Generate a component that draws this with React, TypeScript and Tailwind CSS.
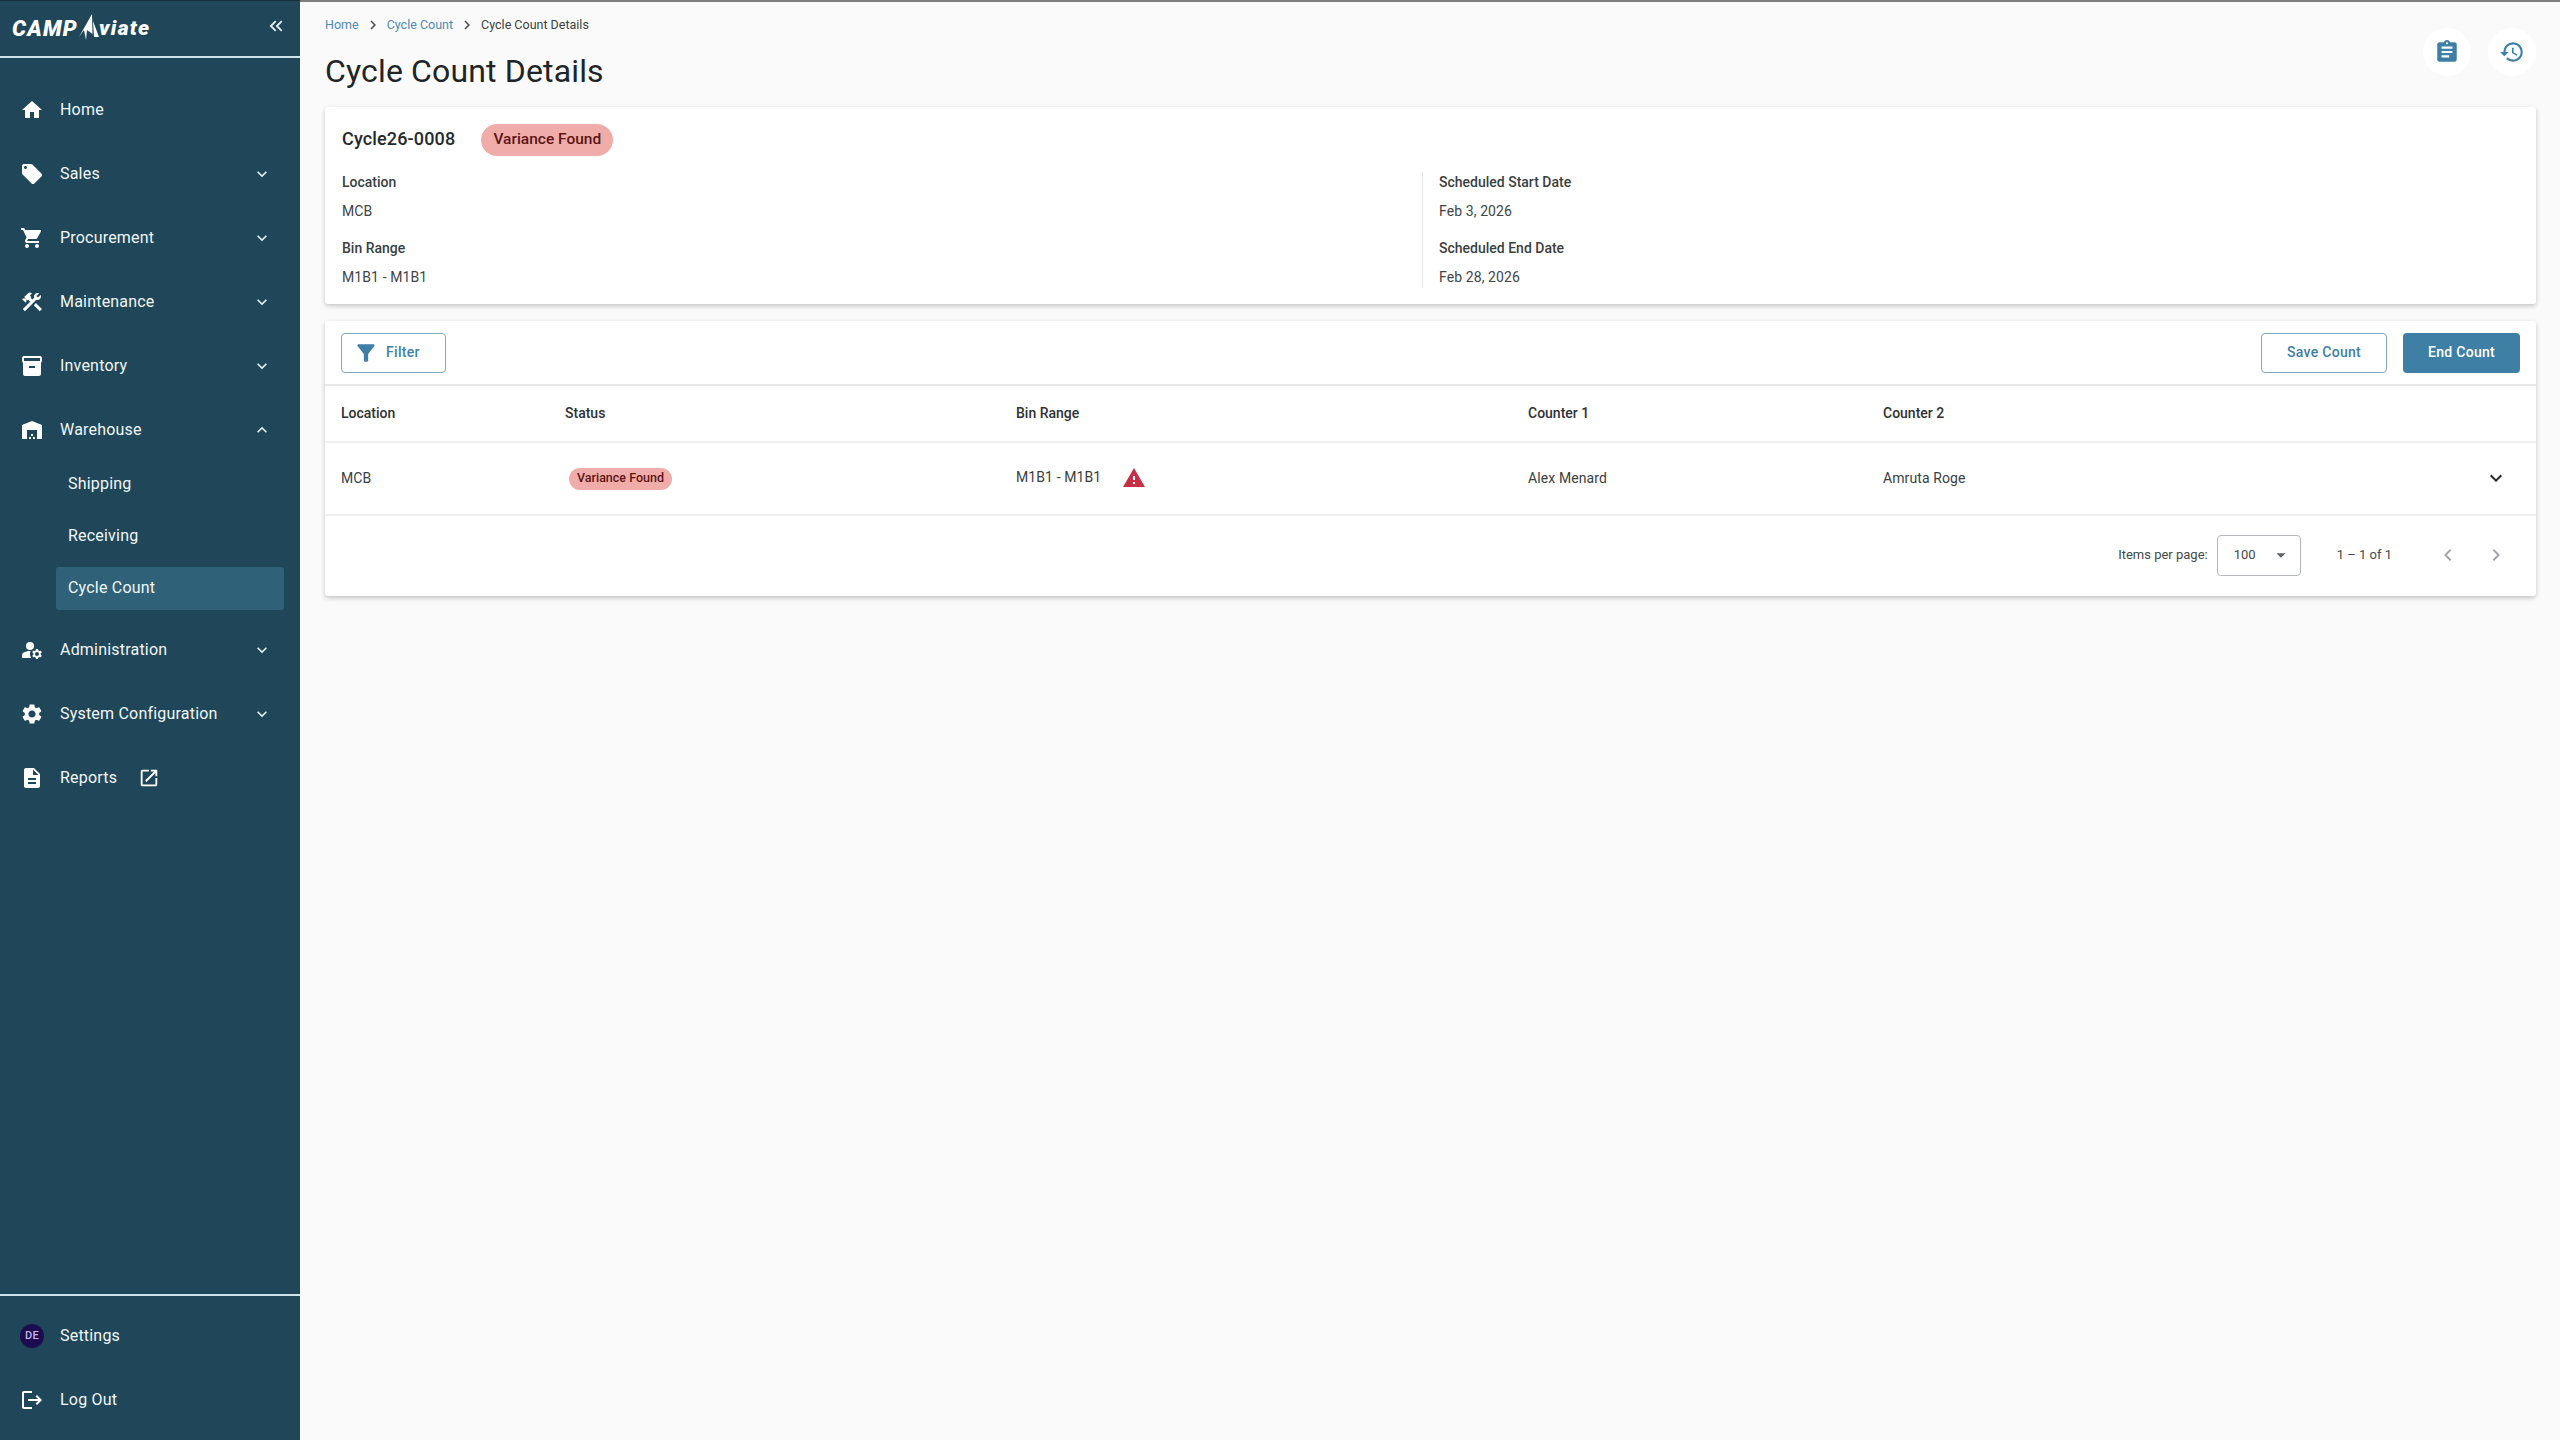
import type { IconType } from 'react-icons'
import {
  MdArrowDropDown,
  MdAssignment,
  MdChevronLeft,
  MdChevronRight,
  MdConstruction,
  MdDescription,
  MdFilterAlt,
  MdHistory,
  MdHome,
  MdInventory2,
  MdKeyboardArrowDown,
  MdKeyboardArrowUp,
  MdKeyboardDoubleArrowLeft,
  MdLocalOffer,
  MdLogout,
  MdManageAccounts,
  MdOpenInNew,
  MdSettings,
  MdShoppingCart,
  MdWarehouse,
  MdWarning,
} from 'react-icons/md'

function NavRow({ icon: Icon, label, chevron }: { icon: IconType; label: string; chevron?: 'up' | 'down' }) {
  return (
    <div className="flex h-16 items-center pl-[20px] pr-[28px] text-[16px] tracking-[0.2px] text-[#f1f6f8]">
      <Icon size={24} className="mr-4 w-6 shrink-0 text-white" />
      <span className="flex-1">{label}</span>
      {chevron === 'down' && <MdKeyboardArrowDown size={20} className="text-[#e6eef2]" />}
      {chevron === 'up' && <MdKeyboardArrowUp size={20} className="text-[#e6eef2]" />}
    </div>
  )
}

function SubRow({ label, active }: { label: string; active?: boolean }) {
  return (
    <div className="flex h-[52px] items-center pl-[56px] pr-4 text-[16px] tracking-[0.2px] text-[#f1f6f8]">
      <div className={`flex h-[43px] w-full items-center rounded-[3px] pl-3 ${active ? 'bg-[#2f6279]' : ''}`}>{label}</div>
    </div>
  )
}

function Sidebar() {
  return (
    <aside className="flex h-full w-[300px] shrink-0 flex-col border-t border-[#14303f] bg-[#1f4759]">
      <div className="flex h-[57px] items-center justify-between border-b-2 border-[#cfe3ea] pl-3 pr-[13px]">
        <div className="flex items-center text-white">
          <span className="text-[22px] font-black italic tracking-[1.2px]">CAMP</span>
          <svg width="20" height="27" viewBox="0 0 20 27" className="-mt-[3px] ml-[1px]">
            <path d="M13 0 L13.5 20 L8 16 L7 26 L5 16 L0 23 Z" fill="#fff" />
            <path d="M14 7 L20 23 L15 23 Z" fill="#fff" />
          </svg>
          <span className="text-[21px] font-black italic tracking-[1.3px]">viate</span>
        </div>
        <MdKeyboardDoubleArrowLeft size={22} className="-mt-[6px] text-[#e6eef2]" />
      </div>
      <nav className="mt-5 flex-1">
        <NavRow icon={MdHome} label="Home" />
        <NavRow icon={MdLocalOffer} label="Sales" chevron="down" />
        <NavRow icon={MdShoppingCart} label="Procurement" chevron="down" />
        <NavRow icon={MdConstruction} label="Maintenance" chevron="down" />
        <NavRow icon={MdInventory2} label="Inventory" chevron="down" />
        <NavRow icon={MdWarehouse} label="Warehouse" chevron="up" />
        <div className="-mt-1 mb-1">
          <SubRow label="Shipping" />
          <SubRow label="Receiving" />
          <SubRow label="Cycle Count" active />
        </div>
        <NavRow icon={MdManageAccounts} label="Administration" chevron="down" />
        <NavRow icon={MdSettings} label="System Configuration" chevron="down" />
        <div className="flex h-16 items-center pl-[20px] text-[16px] tracking-[0.2px] text-[#f1f6f8]">
          <MdDescription size={24} className="mr-4 w-6 shrink-0 text-white" />
          <span>Reports</span>
          <MdOpenInNew size={22} className="ml-[21px] text-white" />
        </div>
      </nav>
      <div className="border-t-2 border-[#cfe3ea] pb-2 pt-2">
        <div className="flex h-16 items-center pl-[20px] text-[16px] tracking-[0.2px] text-[#f1f6f8]">
          <div className="mr-4 flex h-6 w-6 items-center justify-center rounded-full bg-[#1d0b4f] text-[11px] font-medium text-[#c9b6ea]">
            DE
          </div>
          <span>Settings</span>
        </div>
        <div className="flex h-16 items-center pl-[20px] text-[16px] tracking-[0.2px] text-[#f1f6f8]">
          <MdLogout size={24} className="mr-4 w-6 text-white" />
          <span>Log Out</span>
        </div>
      </div>
    </aside>
  )
}

function Field({ label, value }: { label: string; value: string }) {
  return (
    <div className="h-[66px]">
      <div className="text-[14px] font-medium leading-[20px] text-[#3a3f42]">{label}</div>
      <div className="mt-[9px] text-[14px] leading-[20px] tracking-[0.1px] text-[#3f4447]">{value}</div>
    </div>
  )
}

function SummaryCard() {
  return (
    <section className="h-[197px] rounded-[3px] bg-white pl-[17px] pt-[17px] shadow-[0_2px_5px_rgba(0,0,0,0.22)]">
      <div className="flex h-[31px] items-center">
        <span className="-mt-[2px] text-[18px] font-medium tracking-[0.15px] text-[#26292b]">Cycle26-0008</span>
        <span className="ml-[26px] flex h-[32px] items-center rounded-full bg-[#f0aca8] px-3 text-[15.5px] font-medium text-[#5e1414]">
          Variance Found
        </span>
      </div>
      <div className="mt-[17px] flex">
        <div className="w-[1080px]">
          <Field label="Location" value="MCB" />
          <Field label="Bin Range" value="M1B1 - M1B1" />
        </div>
        <div className="h-[116px] border-l border-[#e6e6e6] pl-4">
          <Field label="Scheduled Start Date" value="Feb 3, 2026" />
          <Field label="Scheduled End Date" value="Feb 28, 2026" />
        </div>
      </div>
    </section>
  )
}

function TableCard() {
  return (
    <section className="mt-[17px] h-[275px] rounded-[3px] bg-white shadow-[0_2px_5px_rgba(0,0,0,0.22)]">
      <div className="flex h-[65px] items-center justify-between border-b-2 border-[#e8e8e8] px-4">
        <button className="flex h-10 w-[105px] items-center justify-center rounded-[4px] border border-[#7ea8be] text-[14px] font-medium tracking-[0.3px] text-[#3e7fa5]">
          <MdFilterAlt size={26} className="ml-[-14px] mr-[7px]" />
          Filter
        </button>
        <div className="flex gap-4">
          <button className="h-10 w-[126px] rounded-[4px] border border-[#7ea8be] text-[14px] font-medium tracking-[0.3px] text-[#3e7fa5]">
            Save Count
          </button>
          <button className="h-10 w-[117px] rounded-[4px] bg-[#3e7fa5] text-[14px] font-medium tracking-[0.3px] text-white">
            End Count
          </button>
        </div>
      </div>
      <div className="flex h-[57px] items-center border-b-2 border-[#efefef] pl-4 text-[14px] font-medium text-[#2e3234]">
        <div className="w-[224px]">Location</div>
        <div className="w-[451px]">Status</div>
        <div className="w-[512px]">Bin Range</div>
        <div className="w-[355px]">Counter 1</div>
        <div>Counter 2</div>
      </div>
      <div className="flex h-[73px] items-center border-b-2 border-[#efefef] pl-4 pr-4 text-[14px] tracking-[0.1px] text-[#3a3e40]">
        <div className="w-[224px]">MCB</div>
        <div className="w-[451px]">
          <span className="ml-1 inline-flex h-[22px] items-center rounded-full bg-[#f0aca8] px-2 text-[12.5px] font-medium tracking-normal text-[#5e1414]">
            Variance Found
          </span>
        </div>
        <div className="flex w-[512px] items-center">
          <span className="-mt-[2px]">M1B1 - M1B1</span>
          <MdWarning size={24} className="ml-[21px] -mt-[1px] text-[#c62f45]" />
        </div>
        <div className="w-[355px]">Alex Menard</div>
        <div className="flex-1">Amruta Roge</div>
        <MdKeyboardArrowDown size={24} className="mr-[12px] -mt-[1px] text-[#26292b]" />
      </div>
      <div className="flex h-[78px] items-center justify-end pr-[28px] text-[#45494b]">
        <span className="text-[13px]">Items per page:</span>
        <div className="ml-[9px] flex h-[41px] w-[84px] items-center justify-between rounded-[4px] border border-[#b5b8ba] pl-4 pr-2 text-[13px]">
          100
          <MdArrowDropDown size={22} className="text-[#5f6365]" />
        </div>
        <span className="ml-9 text-[13px]">1 – 1 of 1</span>
        <MdChevronLeft size={24} className="ml-[44px] text-[#a3a6a8]" />
        <MdChevronRight size={24} className="ml-6 text-[#a3a6a8]" />
      </div>
    </section>
  )
}

export default function App() {
  return (
    <div className="flex h-screen w-full overflow-hidden bg-[#fafafa] font-['Roboto',sans-serif]">
      <Sidebar />
      <main className="flex-1 border-t-2 border-[#7d7d7d] pl-[25px] pr-6">
        <div className="flex h-[105px] items-start justify-between">
          <div>
            <div className="mt-[14px] flex items-center text-[12.5px] leading-[18px]">
              <span className="text-[#4d8bb0]">Home</span>
              <MdChevronRight size={18} className="mx-[5px] text-[#4a4e50]" />
              <span className="text-[#4d8bb0]">Cycle Count</span>
              <MdChevronRight size={18} className="mx-[5px] text-[#4a4e50]" />
              <span className="text-[#3a3e40]">Cycle Count Details</span>
            </div>
            <h1 className="mt-[17px] text-[32px] leading-[40px] tracking-[0.15px] text-[#212426]">Cycle Count Details</h1>
          </div>
          <div className="mr-0 mt-[26px] flex gap-[17px]">
            <div className="flex h-12 w-12 items-center justify-center rounded-full bg-white">
              <MdAssignment size={26} className="text-[#3e7fa5]" />
            </div>
            <div className="flex h-12 w-12 items-center justify-center rounded-full bg-white">
              <MdHistory size={26} className="text-[#3e7fa5]" />
            </div>
          </div>
        </div>
        <SummaryCard />
        <TableCard />
      </main>
    </div>
  )
}
